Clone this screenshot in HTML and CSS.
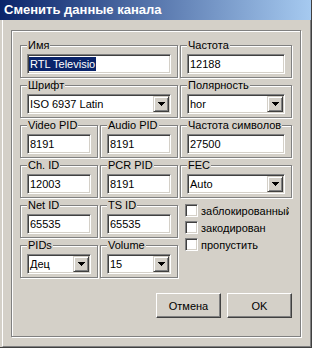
FILE: index.html
```html
<!DOCTYPE html>
<html lang="ru">
<head>
    <meta charset="UTF-8">
    <meta name="viewport" content="width=device-width, initial-scale=1.0">
    <title>Сменить данные канала</title>
    <link rel="stylesheet" href="styles.css">
</head>
<body>
    <div class="window">
        <div class="titlebar">Сменить данные канала</div>

        <div class="client">
            <div class="panel">
                <div class="groups">
                    <div class="group wide">
                        <span class="caption">Имя</span>
                        <div class="field"><span class="selected">RTL Televisio</span></div>
                    </div>
                    <div class="group">
                        <span class="caption">Частота</span>
                        <div class="field"><span>12188</span></div>
                    </div>

                    <div class="group wide">
                        <span class="caption">Шрифт</span>
                        <div class="field combo">
                            <span class="value">ISO 6937 Latin</span>
                            <span class="arrow"><svg width="7" height="4" viewBox="0 0 7 4"><path d="M0 0h7v1H0zM1 1h5v1H1zM2 2h3v1H2zM3 3h1v1H3z"/></svg></span>
                        </div>
                    </div>
                    <div class="group">
                        <span class="caption">Полярность</span>
                        <div class="field combo">
                            <span class="value">hor</span>
                            <span class="arrow"><svg width="7" height="4" viewBox="0 0 7 4"><path d="M0 0h7v1H0zM1 1h5v1H1zM2 2h3v1H2zM3 3h1v1H3z"/></svg></span>
                        </div>
                    </div>

                    <div class="group">
                        <span class="caption">Video PID</span>
                        <div class="field"><span>8191</span></div>
                    </div>
                    <div class="group">
                        <span class="caption">Audio PID</span>
                        <div class="field"><span>8191</span></div>
                    </div>
                    <div class="group">
                        <span class="caption">Частота символов</span>
                        <div class="field"><span>27500</span></div>
                    </div>

                    <div class="group">
                        <span class="caption">Ch. ID</span>
                        <div class="field"><span>12003</span></div>
                    </div>
                    <div class="group">
                        <span class="caption">PCR PID</span>
                        <div class="field"><span>8191</span></div>
                    </div>
                    <div class="group">
                        <span class="caption">FEC</span>
                        <div class="field combo">
                            <span class="value">Auto</span>
                            <span class="arrow"><svg width="7" height="4" viewBox="0 0 7 4"><path d="M0 0h7v1H0zM1 1h5v1H1zM2 2h3v1H2zM3 3h1v1H3z"/></svg></span>
                        </div>
                    </div>

                    <div class="group">
                        <span class="caption">Net ID</span>
                        <div class="field"><span>65535</span></div>
                    </div>
                    <div class="group">
                        <span class="caption">TS ID</span>
                        <div class="field"><span>65535</span></div>
                    </div>
                    <div class="checks">
                        <label class="check"><span class="box"></span>заблокированный</label>
                        <label class="check"><span class="box"></span>закодирован</label>
                        <label class="check"><span class="box"></span>пропустить</label>
                    </div>

                    <div class="group">
                        <span class="caption">PIDs</span>
                        <div class="field combo">
                            <span class="value">Дец</span>
                            <span class="arrow"><svg width="7" height="4" viewBox="0 0 7 4"><path d="M0 0h7v1H0zM1 1h5v1H1zM2 2h3v1H2zM3 3h1v1H3z"/></svg></span>
                        </div>
                    </div>
                    <div class="group">
                        <span class="caption">Volume</span>
                        <div class="field combo">
                            <span class="value">15</span>
                            <span class="arrow"><svg width="7" height="4" viewBox="0 0 7 4"><path d="M0 0h7v1H0zM1 1h5v1H1zM2 2h3v1H2zM3 3h1v1H3z"/></svg></span>
                        </div>
                    </div>
                </div>

                <div class="buttons">
                    <button class="btn">Отмена</button>
                    <button class="btn">OK</button>
                </div>
            </div>
        </div>
    </div>
</body>
</html>
```

FILE: styles.css
```css
* {
    box-sizing: border-box;
}

body {
    margin: 0;
    font-family: "Liberation Sans", Arial, sans-serif;
    font-size: 11px;
    color: #000;
    background-color: #d4d0c8;
}

.window {
    width: 312px;
    height: 348px;
    display: flex;
    flex-direction: column;
    background-color: #d4d0c8;
    border-right: 1px solid #404040;
    border-bottom: 1px solid #404040;
}

.titlebar {
    flex: none;
    height: 20px;
    padding-left: 4px;
    line-height: 20px;
    font-size: 13px;
    font-weight: bold;
    color: #fff;
    background: linear-gradient(to right, #0a246a, #a6caf0);
}

.client {
    flex: 1;
    display: flex;
    margin-left: 2px;
    padding: 10px 10px 9px 8px;
    border-left: 1px solid #fff;
    border-right: 1px solid #808080;
    border-bottom: 1px solid #808080;
}

/* etched frames: grey line with a white line beside it */
.panel {
    flex: 1;
    display: flex;
    flex-direction: column;
    padding: 14px 8px 0 8px;
    border: 1px solid #808080;
    box-shadow: inset 1px 1px #fff, 1px 1px #fff;
}

.groups {
    display: grid;
    grid-template-columns: 78px 78px 112px;
    grid-auto-rows: 33px;
    gap: 7px 2px;
}

.group {
    position: relative;
    padding: 8px 6px 0 6px;
    border: 1px solid #808080;
    box-shadow: inset 1px 1px #fff, 1px 1px #fff;
}

.group.wide {
    grid-column: span 2;
}

.caption {
    position: absolute;
    left: 6px;
    top: -7px;
    padding: 0 1px;
    line-height: 13px;
    white-space: nowrap;
    background-color: #d4d0c8;
}

.field {
    height: 20px;
    display: flex;
    align-items: center;
    padding: 0 2px;
    background-color: #fff;
    border: 1px solid;
    border-color: #808080 #fff #fff #808080;
    box-shadow: inset 1px 1px #404040, inset -1px -1px #d4d0c8;
    white-space: nowrap;
    overflow: hidden;
}

.field span {
    line-height: 14px;
}

.field .selected {
    margin-left: -1px;
    padding: 0 1px;
    color: #fff;
    background-color: #0a246a;
}

.combo {
    padding-right: 1px;
}

.combo .value {
    flex: 1;
}

.combo .arrow {
    flex: none;
    width: 16px;
    height: 16px;
    display: flex;
    align-items: center;
    justify-content: center;
    background-color: #d4d0c8;
    border: 1px solid;
    border-color: #d4d0c8 #404040 #404040 #d4d0c8;
    box-shadow: inset 1px 1px #fff, inset -1px -1px #808080;
}

.arrow svg {
    display: block;
    shape-rendering: crispEdges;
}

.checks {
    grid-column: 3;
    grid-row: 5 / span 2;
    display: flex;
    flex-direction: column;
    gap: 4px;
    margin-top: -1px;
    padding: 0 3px 0 5px;
}

.check {
    display: flex;
    align-items: center;
    gap: 3px;
    height: 13px;
    white-space: nowrap;
    overflow: hidden;
}

.box {
    flex: none;
    width: 13px;
    height: 13px;
    background-color: #fff;
    border: 1px solid;
    border-color: #808080 #fff #fff #808080;
    box-shadow: inset 1px 1px #404040, inset -1px -1px #d4d0c8;
}

.buttons {
    display: flex;
    justify-content: flex-end;
    gap: 6px;
    margin-top: 15px;
}

.btn {
    width: 65px;
    height: 25px;
    padding: 0;
    font: inherit;
    color: #000;
    background-color: #d4d0c8;
    border: 1px solid;
    border-color: #fff #404040 #404040 #fff;
    box-shadow: inset -1px -1px #808080;
}
```
